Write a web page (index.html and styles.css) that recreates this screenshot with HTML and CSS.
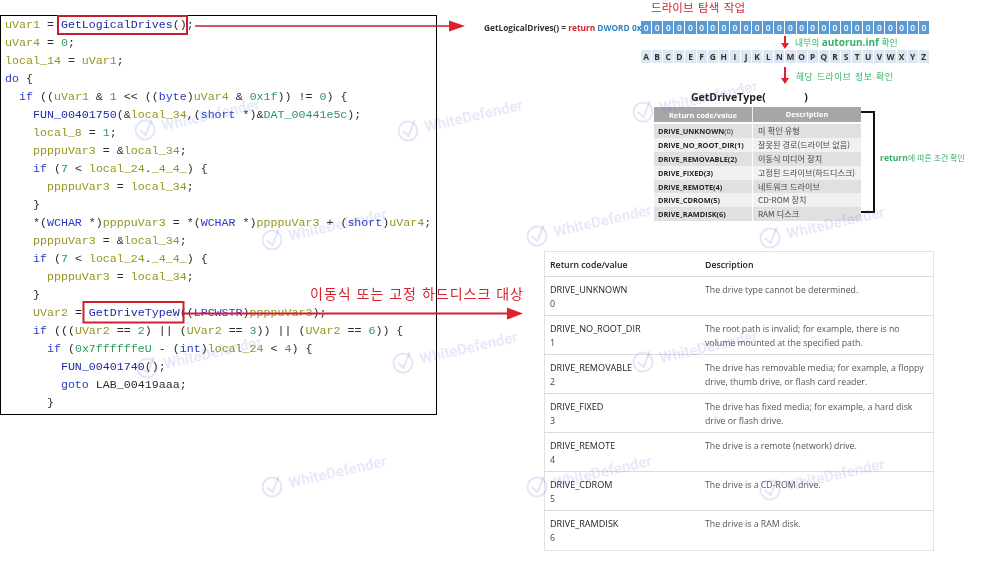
FILE: index.html
```html
<!DOCTYPE html>
<html lang="ko">
<head>
<meta charset="utf-8">
<title>GetLogicalDrives / GetDriveType</title>
<link rel="stylesheet" href="styles.css">
</head>
<body>
<main class="page">
  <section class="code-panel">
<pre class="code"><span class="v">uVar1</span> = <span class="f">GetLogicalDrives</span>();
<span class="v">uVar4</span> = <span class="n">0</span>;
<span class="v">local_14</span> = <span class="v">uVar1</span>;
<span class="k">do</span> {
  <span class="k">if</span> ((<span class="v">uVar1</span> &amp; <span class="n">1</span> &lt;&lt; ((<span class="k">byte</span>)<span class="v">uVar4</span> &amp; <span class="n">0x1f</span>)) != <span class="n">0</span>) {
    <span class="f">FUN_00401750</span>(&amp;<span class="v">local_34</span>,(<span class="k">short</span> *)&amp;<span class="t">DAT_00441e5c</span>);
    <span class="v">local_8</span> = <span class="n">1</span>;
    <span class="v">ppppuVar3</span> = &amp;<span class="v">local_34</span>;
    <span class="k">if</span> (<span class="n">7</span> &lt; <span class="v">local_24</span>.<span class="v">_4_4_</span>) {
      <span class="v">ppppuVar3</span> = <span class="v">local_34</span>;
    }
    *(<span class="k">WCHAR</span> *)<span class="v">ppppuVar3</span> = *(<span class="k">WCHAR</span> *)<span class="v">ppppuVar3</span> + (<span class="k">short</span>)<span class="v">uVar4</span>;
    <span class="v">ppppuVar3</span> = &amp;<span class="v">local_34</span>;
    <span class="k">if</span> (<span class="n">7</span> &lt; <span class="v">local_24</span>.<span class="v">_4_4_</span>) {
      <span class="v">ppppuVar3</span> = <span class="v">local_34</span>;
    }
    <span class="v">UVar2</span> = <span class="f">GetDriveTypeW</span>((<span class="k">LPCWSTR</span>)<span class="v">ppppuVar3</span>);
    <span class="k">if</span> (((<span class="v">UVar2</span> == <span class="n">2</span>) || (<span class="v">UVar2</span> == <span class="n">3</span>)) || (<span class="v">UVar2</span> == <span class="n">6</span>)) {
      <span class="k">if</span> (<span class="n">0x7ffffffeU</span> - (<span class="k">int</span>)<span class="v">local_24</span> &lt; <span class="n">4</span>) {
        <span class="f">FUN_00401740</span>();
        <span class="k">goto</span> LAB_00419aaa;
      }</pre>
  </section>

  <section class="side">
    <h2 class="diagram-title">드라이브 탐색 작업</h2>

    <div class="bit-row">
      <p class="bit-label">GetLogicalDrives() = <span class="ret">return</span> <span class="dword">DWORD 0x</span></p>
      <ol class="cells cells-bits">
        <li>0</li><li>0</li><li>0</li><li>0</li><li>0</li><li>0</li><li>0</li><li>0</li><li>0</li><li>0</li><li>0</li><li>0</li><li>0</li>
        <li>0</li><li>0</li><li>0</li><li>0</li><li>0</li><li>0</li><li>0</li><li>0</li><li>0</li><li>0</li><li>0</li><li>0</li><li>0</li>
      </ol>
    </div>

    <div class="step step-a">
      <svg class="down" width="10" height="13" viewBox="0 0 10 13"><path d="M4 0h2v7h3l-4 6-4-6h3z" fill="#e0202c"/></svg>
      <span>내부의 <b>autorun.inf</b> 확인</span>
    </div>

    <ol class="cells cells-letters">
      <li>A</li><li>B</li><li>C</li><li>D</li><li>E</li><li>F</li><li>G</li><li>H</li><li>I</li><li>J</li><li>K</li><li>L</li><li>N</li>
      <li>M</li><li>O</li><li>P</li><li>Q</li><li>R</li><li>S</li><li>T</li><li>U</li><li>V</li><li>W</li><li>X</li><li>Y</li><li>Z</li>
    </ol>

    <div class="step step-b">
      <svg class="down" width="10" height="17" viewBox="0 0 10 17"><path d="M4 0h2v11h3l-4 6-4-6h3z" fill="#e0202c"/></svg>
      <span>해당 드라이브 정보 확인</span>
    </div>

    <p class="fn-name">GetDriveType(<span class="fn-close">)</span></p>

    <div class="summary">
      <div class="summary-table">
        <div class="sum-head"><span>Return code/value</span><span>Description</span></div>
        <div class="sum-row"><b>DRIVE_UNKNOWN<i>(0)</i></b><span>미 확인 유형</span></div>
        <div class="sum-row"><b>DRIVE_NO_ROOT_DIR(1)</b><span>잘못된 경로(드라이브 없음)</span></div>
        <div class="sum-row"><b>DRIVE_REMOVABLE(2)</b><span>이동식 미디어 장치</span></div>
        <div class="sum-row"><b>DRIVE_FIXED(3)</b><span>고정된 드라이브(하드디스크)</span></div>
        <div class="sum-row"><b>DRIVE_REMOTE(4)</b><span>네트워크 드라이브</span></div>
        <div class="sum-row"><b>DRIVE_CDROM(5)</b><span>CD-ROM 장치</span></div>
        <div class="sum-row"><b>DRIVE_RAMDISK(6)</b><span>RAM 디스크</span></div>
      </div>
      <div class="bracket"></div>
      <p class="bracket-note"><b>return</b>에 따른 조건 확인</p>
    </div>

    <div class="docs">
      <div class="doc-row doc-head"><span>Return code/value</span><span>Description</span></div>
      <div class="doc-row"><div>DRIVE_UNKNOWN<br><small>0</small></div><p>The drive type cannot be determined.</p></div>
      <div class="doc-row"><div>DRIVE_NO_ROOT_DIR<br><small>1</small></div><p>The root path is invalid; for example, there is no volume mounted at the specified path.</p></div>
      <div class="doc-row"><div>DRIVE_REMOVABLE<br><small>2</small></div><p>The drive has removable media; for example, a floppy drive, thumb drive, or flash card reader.</p></div>
      <div class="doc-row"><div>DRIVE_FIXED<br><small>3</small></div><p>The drive has fixed media; for example, a hard disk drive or flash drive.</p></div>
      <div class="doc-row"><div>DRIVE_REMOTE<br><small>4</small></div><p>The drive is a remote (network) drive.</p></div>
      <div class="doc-row"><div>DRIVE_CDROM<br><small>5</small></div><p>The drive is a CD-ROM drive.</p></div>
      <div class="doc-row"><div>DRIVE_RAMDISK<br><small>6</small></div><p>The drive is a RAM disk.</p></div>
    </div>
  </section>

  <svg class="marks" width="984" height="568" viewBox="0 0 984 568" aria-hidden="true">
    <rect x="58" y="16" width="129" height="18" fill="none" stroke="#c1202e" stroke-width="2"/>
    <path d="M195 26H450" stroke="#c1202e" stroke-width="1.6" fill="none"/>
    <path d="M449 20.500l16 5.500-16 5.500z" fill="#e0202c"/>
    <rect x="83.500" y="302" width="100" height="20.500" fill="none" stroke="#d0202e" stroke-width="2"/>
    <path d="M184 313.500H508" stroke="#d0202e" stroke-width="2" fill="none"/>
    <path d="M507 307.500l16 6-16 6z" fill="#e0202c"/>
  </svg>
  <p class="callout">이동식 또는 고정 하드디스크 대상</p>

  <div class="wm wm-1"><svg width="22" height="22" viewBox="0 0 22 22"><circle cx="11" cy="11" r="9.500" fill="none" stroke="currentColor" stroke-width="2"/><path d="M6 10l4.500 6L20 2" fill="none" stroke="currentColor" stroke-width="2"/></svg><span>WhiteDefender</span></div>
  <div class="wm wm-2"><svg width="22" height="22" viewBox="0 0 22 22"><circle cx="11" cy="11" r="9.500" fill="none" stroke="currentColor" stroke-width="2"/><path d="M6 10l4.500 6L20 2" fill="none" stroke="currentColor" stroke-width="2"/></svg><span>WhiteDefender</span></div>
  <div class="wm wm-3"><svg width="22" height="22" viewBox="0 0 22 22"><circle cx="11" cy="11" r="9.500" fill="none" stroke="currentColor" stroke-width="2"/><path d="M6 10l4.500 6L20 2" fill="none" stroke="currentColor" stroke-width="2"/></svg><span>WhiteDefender</span></div>
  <div class="wm wm-4"><svg width="22" height="22" viewBox="0 0 22 22"><circle cx="11" cy="11" r="9.500" fill="none" stroke="currentColor" stroke-width="2"/><path d="M6 10l4.500 6L20 2" fill="none" stroke="currentColor" stroke-width="2"/></svg><span>WhiteDefender</span></div>
  <div class="wm wm-5"><svg width="22" height="22" viewBox="0 0 22 22"><circle cx="11" cy="11" r="9.500" fill="none" stroke="currentColor" stroke-width="2"/><path d="M6 10l4.500 6L20 2" fill="none" stroke="currentColor" stroke-width="2"/></svg><span>WhiteDefender</span></div>
  <div class="wm wm-6"><svg width="22" height="22" viewBox="0 0 22 22"><circle cx="11" cy="11" r="9.500" fill="none" stroke="currentColor" stroke-width="2"/><path d="M6 10l4.500 6L20 2" fill="none" stroke="currentColor" stroke-width="2"/></svg><span>WhiteDefender</span></div>
  <div class="wm wm-7"><svg width="22" height="22" viewBox="0 0 22 22"><circle cx="11" cy="11" r="9.500" fill="none" stroke="currentColor" stroke-width="2"/><path d="M6 10l4.500 6L20 2" fill="none" stroke="currentColor" stroke-width="2"/></svg><span>WhiteDefender</span></div>
  <div class="wm wm-8"><svg width="22" height="22" viewBox="0 0 22 22"><circle cx="11" cy="11" r="9.500" fill="none" stroke="currentColor" stroke-width="2"/><path d="M6 10l4.500 6L20 2" fill="none" stroke="currentColor" stroke-width="2"/></svg><span>WhiteDefender</span></div>
  <div class="wm wm-9"><svg width="22" height="22" viewBox="0 0 22 22"><circle cx="11" cy="11" r="9.500" fill="none" stroke="currentColor" stroke-width="2"/><path d="M6 10l4.500 6L20 2" fill="none" stroke="currentColor" stroke-width="2"/></svg><span>WhiteDefender</span></div>
  <div class="wm wm-10"><svg width="22" height="22" viewBox="0 0 22 22"><circle cx="11" cy="11" r="9.500" fill="none" stroke="currentColor" stroke-width="2"/><path d="M6 10l4.500 6L20 2" fill="none" stroke="currentColor" stroke-width="2"/></svg><span>WhiteDefender</span></div>
  <div class="wm wm-11"><svg width="22" height="22" viewBox="0 0 22 22"><circle cx="11" cy="11" r="9.500" fill="none" stroke="currentColor" stroke-width="2"/><path d="M6 10l4.500 6L20 2" fill="none" stroke="currentColor" stroke-width="2"/></svg><span>WhiteDefender</span></div>
  <div class="wm wm-12"><svg width="22" height="22" viewBox="0 0 22 22"><circle cx="11" cy="11" r="9.500" fill="none" stroke="currentColor" stroke-width="2"/><path d="M6 10l4.500 6L20 2" fill="none" stroke="currentColor" stroke-width="2"/></svg><span>WhiteDefender</span></div>
</main>
</body>
</html>
```
FILE: styles.css
```css
* { box-sizing: border-box; }
html, body { margin: 0; padding: 0; background: #fff; }
body { width: 984px; height: 568px; overflow: hidden; font-family: "Open Sans", "Noto Sans CJK KR", sans-serif; }
p, h2, ol { margin: 0; padding: 0; }
ol { list-style: none; }

.page { position: relative; display: flex; align-items: flex-start; width: 984px; height: 568px; overflow: hidden; }

/* decompiler panel */
.code-panel { flex: none; width: 437px; height: 400px; margin-top: 15px; border: 1.5px solid #000; border-left-width: 1px; padding-left: 4px; }
.code { margin: 0; font: 11.65px/18px "Liberation Mono", monospace; color: #2b2b2b; filter: blur(.35px); }
.v { color: #96951f; }
.k { color: #2a3cc4; }
.f { color: #1f2aa8; }
.t { color: #2f8f7f; }
.n { color: #2f9a58; }

/* right column */
.side { flex: none; width: 547px; filter: blur(.3px); }
.diagram-title { margin: 1px 0 0 214px; font: 400 11.5px/13px "Noto Sans CJK KR", sans-serif; color: #d4232e; letter-spacing: .1px; word-spacing: 1px; white-space: nowrap; }

.bit-row { display: flex; align-items: center; margin-top: 7px; margin-left: 47px; height: 13px; }
.bit-label { width: 157px; flex: none; font-size: 8.3px; font-weight: 700; color: #333; white-space: nowrap; }
.ret { color: #d4232e; }
.dword { color: #2a86c0; }

.cells { display: grid; grid-template-columns: repeat(26, 11.12px); width: 290px; height: 13px; }
.cells li { display: flex; align-items: center; justify-content: center; font-size: 8.4px; border-right: 1px solid #fff; }
.cells-bits li { background: #5b9bd5; color: #fff; font-weight: 600; }
.cells-letters { margin-left: 204px; }
.cells-letters li { background: #dce6f2; color: #333; font-weight: 700; }

.step { display: flex; align-items: center; margin-left: 343px; font: 400 8.8px/12px "Noto Sans CJK KR", sans-serif; color: #35b268; white-space: nowrap; }
.step b { font-family: "Open Sans", sans-serif; font-size: 10px; font-weight: 700; }
.step-a { height: 16px; gap: 5px; }
.step-b { height: 28px; gap: 6px; padding-bottom: 1px; letter-spacing: .45px; word-spacing: 1px; }
.step-b .down { align-self: flex-start; margin-top: 4px; }
.down { flex: none; }

.fn-name { margin-left: 254px; height: 13px; font-size: 10.5px; line-height: 13px; font-weight: 700; color: #222; white-space: nowrap; }
.fn-close { margin-left: 38.500px; }

.summary { display: flex; align-items: flex-start; margin-left: 217px; margin-top: 3px; height: 144px; }
.summary-table { width: 207px; flex: none; }
.sum-head, .sum-row { display: grid; grid-template-columns: 98px 109px; align-items: center; }
.sum-head { height: 15px; margin-bottom: 2px; background: #a6a6a6; color: #fff; font-size: 7.4px; font-weight: 700; }
.sum-head span { text-align: center; }
.sum-head span + span { border-left: 1px solid #eee; line-height: 15px; }
.sum-row { height: 13.900px; font: 400 8.100px/14px "Noto Sans CJK KR", sans-serif; color: #444; background: #f1f1f1; }
.sum-row:nth-child(even) { background: #e0e0e0; }
.sum-row b { padding-left: 4px; font: 700 7.4px/14px "Open Sans", sans-serif; color: #262626; white-space: nowrap; }
.sum-row b i { font-style: normal; font-weight: 400; }
.sum-row span { padding-left: 5px; border-left: 1px solid #fff; white-space: nowrap; }

.bracket { flex: none; width: 14px; height: 102px; margin-top: 4px; border: 2px solid #111; border-left: 0; }
.bracket-note { align-self: flex-start; margin-top: 45px; margin-left: 5px; font: 400 7.8px/12px "Noto Sans CJK KR", sans-serif; color: #35b268; white-space: nowrap; }
.bracket-note b { font: 700 8.6px/12px "Open Sans", sans-serif; }

/* documentation table */
.docs { width: 390px; margin-left: 107px; border: 1px solid #e2e2e2; font-size: 8.75px; line-height: 14px; color: #555; }
.doc-row { display: grid; grid-template-columns: 155px 1fr; height: 39px; padding: 6px 8px 0 5px; border-bottom: 1px solid #dcdcdc; }
.doc-row:last-child { border-bottom: 0; }
.doc-row > div { color: #222; font-size: 9.1px; }
.doc-row small { font-size: 8.9px; color: #444; }
.doc-head { height: 25px; padding-top: 6px; font-weight: 600; color: #222; }

/* annotations laid over the screenshots */
.marks { position: absolute; left: 0; top: 0; pointer-events: none; }
.callout { position: absolute; left: 310px; top: 284px; font: 400 14px/18px "Noto Sans CJK KR", sans-serif; letter-spacing: 1px; color: #d4232e; white-space: nowrap; filter: blur(.25px); }

/* watermark stamps */
.wm { position: absolute; display: flex; align-items: center; gap: 6px; height: 22px; color: rgba(70, 90, 205, .15); font: 700 15px/22px Roboto, sans-serif; white-space: nowrap; transform: rotate(-13deg); transform-origin: 11px 11px; pointer-events: none; }
.wm svg { flex: none; overflow: visible; }
.wm-1 { left: 134px; top: 119px; }
.wm-2 { left: 397px; top: 120px; }
.wm-3 { left: 632px; top: 101px; }
.wm-4 { left: 261px; top: 229px; }
.wm-5 { left: 526px; top: 225px; }
.wm-6 { left: 759px; top: 227px; }
.wm-7 { left: 136px; top: 357px; }
.wm-8 { left: 392px; top: 352px; }
.wm-9 { left: 632px; top: 351px; }
.wm-10 { left: 261px; top: 476px; }
.wm-11 { left: 526px; top: 476px; }
.wm-12 { left: 759px; top: 479px; }
```
